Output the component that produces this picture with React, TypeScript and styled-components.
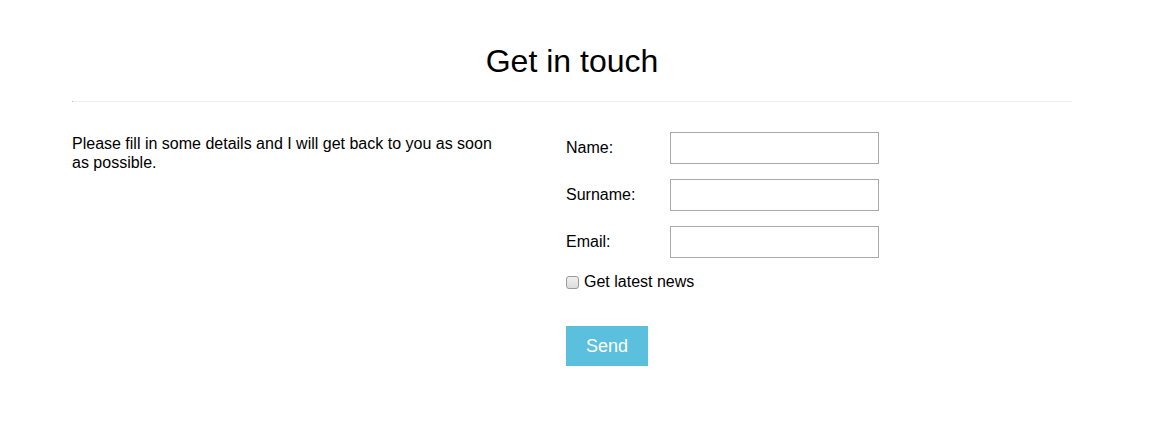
import React from "react";
import styled, { createGlobalStyle } from "styled-components";

const Global = createGlobalStyle`
  html, body { margin: 0; padding: 0; background: #fff; }
  body { font-family: "Liberation Sans", Arial, sans-serif; color: #000; font-size: 16px; }
`;

const Page = styled.div`
  width: 1000px;
  margin-left: 72px;
  padding-top: 43px;
`;

const Title = styled.h1`
  margin: 0;
  text-align: center;
  font-size: 32px;
  font-weight: normal;
  line-height: 37px;
`;

const Rule = styled.hr`
  margin: 21px 0 0;
  height: 0;
  border: 0;
  border-top: 1px solid #eeeeee;
  border-left: 1px solid #8a8a8a;
`;

const Content = styled.div`
  display: flex;
  padding-top: 30px;
`;

const Intro = styled.p`
  width: 430px;
  margin: 3px 64px 0 0;
  line-height: 18.5px;
`;

const Form = styled.form`
  display: flex;
  flex-direction: column;
`;

const Row = styled.div`
  display: flex;
  align-items: center;
  height: 32px;
  margin-bottom: 15px;
`;

const Label = styled.label`
  width: 104px;
`;

const Input = styled.input`
  box-sizing: border-box;
  width: 209px;
  height: 32px;
  border: 1px solid #a9a9a9;
  margin: 0;
  padding: 0 6px;
  font: inherit;
`;

const CheckRow = styled.label`
  display: flex;
  align-items: center;
  height: 18px;
`;

const Check = styled.input`
  appearance: none;
  -webkit-appearance: none;
  box-sizing: border-box;
  width: 13px;
  height: 13px;
  margin: 0 5px 0 0;
  border: 1px solid #9a9a9a;
  border-radius: 3px;
  background: linear-gradient(#f0f0f0, #dcdcdc);

  &:checked {
    background: #5bc0de;
    border-color: #3a9fbd;
  }
`;

const SendButton = styled.button`
  margin-top: 35px;
  width: 82px;
  height: 40px;
  border: 0;
  background: #5bc0de;
  color: #fff;
  font-family: "Liberation Sans", Arial, sans-serif;
  font-size: 18px;
  padding: 0;
  cursor: pointer;
`;

export default function App() {
  return (
    <>
      <Global />
      <Page>
        <Title>Get in touch</Title>
        <Rule />
        <Content>
          <Intro>
            Please fill in some details and I will get back to you as soon as
            possible.
          </Intro>
          <Form onSubmit={(e) => e.preventDefault()}>
            <Row>
              <Label htmlFor="name">Name:</Label>
              <Input id="name" type="text" />
            </Row>
            <Row>
              <Label htmlFor="surname">Surname:</Label>
              <Input id="surname" type="text" />
            </Row>
            <Row>
              <Label htmlFor="email">Email:</Label>
              <Input id="email" type="email" />
            </Row>
            <CheckRow>
              <Check type="checkbox" />
              Get latest news
            </CheckRow>
            <div>
              <SendButton type="submit">Send</SendButton>
            </div>
          </Form>
        </Content>
      </Page>
    </>
  );
}
